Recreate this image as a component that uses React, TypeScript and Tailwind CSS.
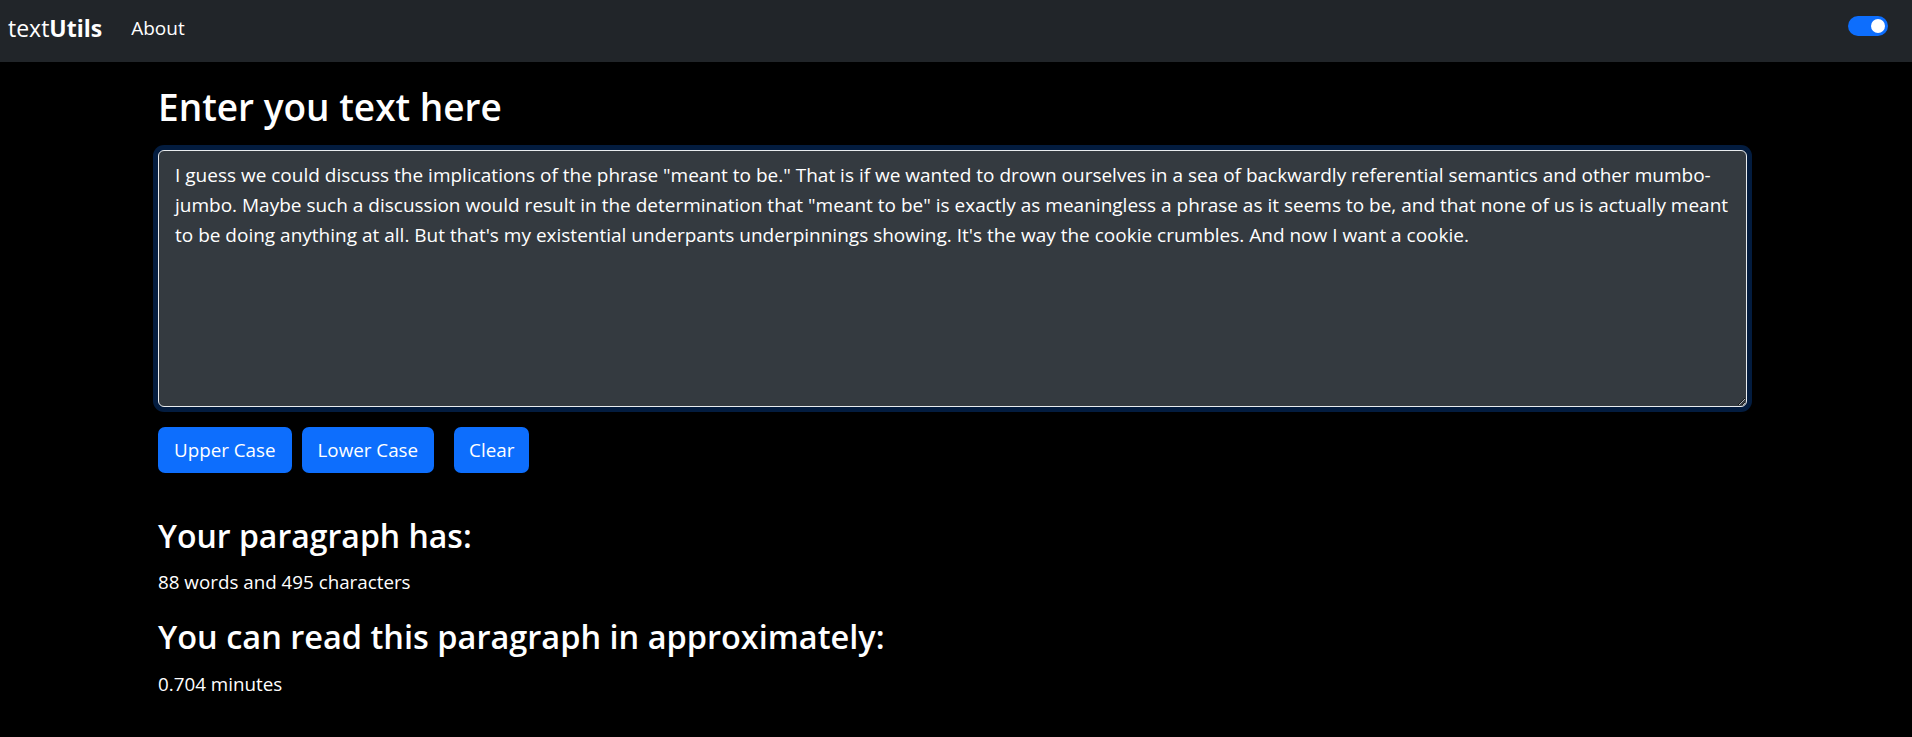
import { useState } from 'react';

const sample =
  'I guess we could discuss the implications of the phrase "meant to be." That is if we wanted to drown ourselves in a sea of backwardly referential semantics and other mumbo-jumbo. Maybe such a discussion would result in the determination that "meant to be" is exactly as meaningless a phrase as it seems to be, and that none of us is actually meant to be doing anything at all. But that\'s my existential underpants underpinnings showing. It\'s the way the cookie crumbles. And now I want a cookie.';

function Navbar() {
  return (
    <nav className="h-[62px] bg-[#212529] flex items-center pl-2 pr-6 pb-[6px]">
      <a className="text-[23px] text-white leading-none">
        text<span className="font-bold">Utils</span>
      </a>
      <a className="ml-[29px] text-[19px] text-white">About</a>
      <div className="ml-auto mb-[4px] w-[40px] h-[20px] rounded-full bg-[#0d6efd] flex items-center justify-end pr-[3px]">
        <div className="w-[14px] h-[14px] rounded-full bg-white" />
      </div>
    </nav>
  );
}

export default function App() {
  const [text, setText] = useState(sample);

  const words = text.split(/\s+/).filter((w) => w.length > 0).length;

  return (
    <div className="min-h-[737px] bg-black text-white font-['Open_Sans',sans-serif]">
      <Navbar />
      <div className="pl-[158px] pr-[165px]">
        <h1 className="mt-[22px] mb-[20px] text-[37px] leading-[46px] font-semibold">Enter you text here</h1>
        <textarea
          value={text}
          onChange={(e) => setText(e.target.value)}
          spellCheck={false}
          className="block w-full h-[257px] rounded-[6px] border border-[#e9ecef] bg-[#343a40] text-white text-[19px] leading-[30px] pt-[9px] pb-2 pl-4 pr-4 outline-none shadow-[0_0_0_5px_#031c3f]"
        />
        <div className="mt-[20px] flex items-center">
          <button onClick={() => setText(text.toUpperCase())}
            className="h-[46px] px-4 rounded-[7px] bg-[#0d6efd] text-white text-[18.8px]">Upper Case</button>
          <button onClick={() => setText(text.toLowerCase())}
            className="ml-[10px] h-[46px] px-4 rounded-[7px] bg-[#0d6efd] text-white text-[18.8px]">Lower Case</button>
          <button onClick={() => setText('')}
            className="ml-[20px] h-[46px] px-[15px] rounded-[7px] bg-[#0d6efd] text-white text-[18.8px]">Clear</button>
        </div>
        <h2 className="mt-[44px] text-[32px] leading-[38px] font-semibold">Your paragraph has:</h2>
        <p className="mt-[13px] text-[18.8px] leading-[28px]">{words} words and {text.length} characters</p>
        <h2 className="mt-[22px] text-[32.5px] leading-[38px] font-semibold">You can read this paragraph in approximately:</h2>
        <p className="mt-[14px] text-[18.8px] leading-[28px]">{Math.round(0.008 * words * 1000) / 1000} minutes</p>
      </div>
    </div>
  );
}
